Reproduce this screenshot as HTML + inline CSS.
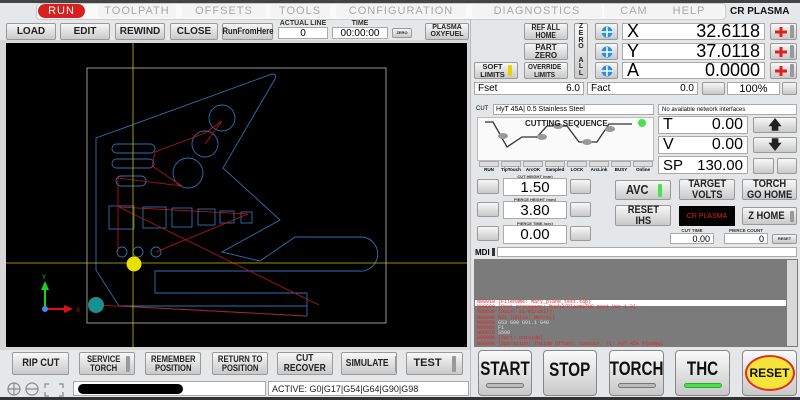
<!DOCTYPE html>
<html><head><meta charset="utf-8">
<style>
*{margin:0;padding:0;box-sizing:border-box}
body{width:800px;height:400px;overflow:hidden;background:#e6e7e8;font-family:"Liberation Sans",sans-serif;position:relative}
.a{position:absolute}
.btn{position:absolute;background:linear-gradient(#f7f7f7,#c9c9c9);border:1px solid #9a9a9a;border-radius:2px;color:#222;font-weight:bold;display:flex;align-items:center;justify-content:center;text-align:center;line-height:0.95;font-family:"Liberation Sans Narrow","Liberation Sans",sans-serif;white-space:nowrap}
.box{position:absolute;background:#fff;border:1px solid #aaa;display:flex;align-items:center}
.tab{position:absolute;top:4px;height:14px;background:#f4f4f4;color:#a9a9a9;font-size:11px;display:flex;align-items:center;justify-content:center;letter-spacing:1px;border-radius:3px}
.lbl{position:absolute;font-size:5px;color:#333;text-align:center;font-weight:bold}
.ind{display:inline-block;width:4px;background:#999;border-radius:1px;margin-left:3px}
.bb{position:absolute;top:350px;height:46px;background:linear-gradient(#fafafa,#c8c8c8);border:1px solid #888;border-radius:4px;font-weight:bold;font-size:19px;color:#111;display:flex;flex-direction:column;align-items:center;justify-content:center}
.bb span{display:inline-block;transform:scaleX(0.8)}
.bar{width:38px;height:5px;border:1px solid #777;border-radius:3px;background:#bbb;margin-top:2px}
.n{display:inline-block;transform:scaleX(0.85)}
</style></head><body>
<div class="a" style="left:0;top:0;width:800px;height:3px;background:#444"></div>
<div class="a" style="left:36px;top:3px;width:690px;height:17px;background:#fafafa;border-radius:4px;border:1px solid #ccc"></div>
<div class="tab" style="left:38px;width:47px;background:#d8211e;color:#fff;border-radius:7px">RUN</div>
<div class="tab" style="left:98px;width:78px">TOOLPATH</div>
<div class="tab" style="left:182px;width:84px">OFFSETS</div>
<div class="tab" style="left:270px;width:60px">TOOLS</div>
<div class="tab" style="left:336px;width:130px">CONFIGURATION</div>
<div class="tab" style="left:472px;width:130px">DIAGNOSTICS</div>
<div class="tab" style="left:604px;width:60px">CAM</div>
<div class="tab" style="left:654px;width:70px">HELP</div>
<div class="a" style="left:730px;top:6px;font-size:10px;font-weight:bold;color:#111">CR PLASMA</div>
<div class="btn" style="left:6px;top:23px;width:50px;height:17px;font-size:10px">LOAD</div>
<div class="btn" style="left:60px;top:23px;width:50px;height:17px;font-size:10px">EDIT</div>
<div class="btn" style="left:115px;top:23px;width:50px;height:17px;font-size:10px">REWIND</div>
<div class="btn" style="left:170px;top:23px;width:48px;height:17px;font-size:10px">CLOSE</div>
<div class="btn" style="left:222px;top:23px;width:51px;height:17px;font-size:9px"><span class="n">RunFromHere</span></div>
<div class="lbl" style="left:278px;top:20px;width:50px;font-size:7px">ACTUAL LINE</div>
<div class="box" style="left:278px;top:27px;width:50px;height:12px;justify-content:center;font-size:10px">0</div>
<div class="lbl" style="left:332px;top:20px;width:56px;font-size:7px">TIME</div>
<div class="box" style="left:332px;top:27px;width:56px;height:12px;justify-content:center;font-size:10px">00:00:00</div>
<div class="btn" style="left:392px;top:28px;width:20px;height:10px;font-size:4px">ZERO</div>
<div class="btn" style="left:425px;top:23px;width:44px;height:17px;font-size:7px">PLASMA<br>OXYFUEL</div>
<svg class="a" style="left:0;top:40px" width="470" height="310" viewBox="0 40 470 310">
<rect x="0" y="40" width="470" height="310" fill="#d8d8d8"/>
<rect x="6" y="43" width="461" height="304" fill="#000"/>
<rect x="87" y="68" width="299" height="255" fill="none" stroke="#bbb" stroke-width="0.8"/>
<g fill="none" stroke="#2f6fb0" stroke-width="0.9">
<path d="M96 138 L272 74 Q277 74 275 79 L223 168 L280 220 L222 252 L260 261 L295 237 L363 237 A17 17 0 0 1 358 271 L155 271 L155 293 L307 293 L307 316 L119 306 L96 270 Z"/>
<path d="M119 306 L307 306"/>
<circle cx="222" cy="118" r="13"/><circle cx="205" cy="144" r="13"/><circle cx="188" cy="173" r="15"/>
<rect x="112" y="144" width="43" height="9" rx="4.5"/><rect x="112" y="159" width="42" height="9" rx="4.5"/><rect x="116" y="176" width="30" height="10" rx="5"/>
<rect x="109" y="206" width="25" height="23"/><rect x="143" y="207" width="23" height="21"/><rect x="172" y="208" width="20" height="19"/><rect x="198" y="209" width="17" height="16"/><rect x="220" y="211" width="14" height="12"/><rect x="241" y="212" width="11" height="11"/>
<circle cx="122" cy="252" r="5"/><circle cx="138" cy="252" r="5"/><circle cx="156" cy="252" r="5"/>
</g>
<g fill="none" stroke="#c0141a" stroke-width="0.8">
<path d="M96 305 L307 316"/><path d="M119 207 L319 305"/><path d="M119 207 L248 214 L156 252"/><path d="M118 178 L118 252"/><path d="M118 178 L182 186 L152 166 L155 152 L205 133 L222 121 L205 144"/>
</g>
<line x1="133" y1="43" x2="133" y2="347" stroke="#c8c000" stroke-width="0.8"/>
<line x1="6" y1="263" x2="467" y2="263" stroke="#c8c000" stroke-width="0.8"/>
<circle cx="134" cy="264" r="7.5" fill="#e8e000"/>
<circle cx="96" cy="305" r="8" fill="#1a8f8f"/>
<path d="M45 309 V289" stroke="#1fd01f" stroke-width="2"/><path d="M41 290 L45 281 L49 290Z" fill="#1fd01f"/>
<path d="M45 309 H65" stroke="#e01010" stroke-width="2"/><path d="M64 305 L73 309 L64 313Z" fill="#e01010"/>
<circle cx="45" cy="309" r="3" fill="#3a8ee8"/>
<text x="76" y="312" font-size="6" fill="#e01010">X</text><text x="42" y="279" font-size="6" fill="#1fd01f">Y</text>
</svg>
<div class="btn" style="left:12px;top:352px;width:57px;height:23px;font-size:11px"><span class="n">RIP CUT</span></div>
<div class="btn" style="left:79px;top:352px;width:56px;height:23px;font-size:9px"><span class="n">SERVICE<br>TORCH</span><span class="ind" style="height:16px"></span></div>
<div class="btn" style="left:145px;top:352px;width:56px;height:23px;font-size:9px"><span class="n">REMEMBER<br>POSITION</span></div>
<div class="btn" style="left:212px;top:352px;width:56px;height:23px;font-size:9px"><span class="n">RETURN TO<br>POSITION</span></div>
<div class="btn" style="left:277px;top:352px;width:56px;height:23px;font-size:10px"><span class="n">CUT<br>RECOVER</span></div>
<div class="btn" style="left:341px;top:352px;width:56px;height:23px;font-size:10px"><span class="n">SIMULATE</span><span class="ind" style="height:16px"></span></div>
<div class="btn" style="left:406px;top:352px;width:57px;height:23px;font-size:11px">TEST<span class="ind" style="height:16px;margin-left:10px"></span></div>
<svg class="a" style="left:4px;top:380px" width="66" height="18"><g fill="none" stroke="#888" stroke-width="1.2"><circle cx="10" cy="9" r="6"/><path d="M4 9h12M10 3v12"/><circle cx="28" cy="9" r="6"/><path d="M22 9h12"/><path d="M45 4h-4v4M55 4h4v4M45 16h-4v-4M55 16h4v-4"/></g></svg>
<div class="box" style="left:73px;top:381px;width:193px;height:15px;padding-left:4px"><div style="width:105px;height:10px;background:#000;border-radius:5px"></div></div>
<div class="box" style="left:268px;top:381px;width:201px;height:15px;font-size:9px;padding-left:3px;color:#222">ACTIVE: G0|G17|G54|G64|G90|G98</div>
<div class="a" style="left:470px;top:20px;width:330px;height:380px;background:#e4e6e8;border-left:1px solid #bbb"></div>
<div class="btn" style="left:524px;top:23px;width:44px;height:17px;font-size:8px"><span class="n">REF ALL<br>HOME</span></div>
<div class="btn" style="left:524px;top:43px;width:44px;height:17px;font-size:8px">PART<br>ZERO</div>
<div class="btn" style="left:474px;top:62px;width:44px;height:17px;font-size:7.5px">SOFT<br>LIMITS<span class="ind" style="height:11px;background:#f0d000"></span></div>
<div class="btn" style="left:524px;top:62px;width:44px;height:17px;font-size:7.5px"><span class="n">OVERRIDE<br>LIMITS</span><span class="ind" style="height:11px"></span></div>
<div class="btn" style="left:574px;top:23px;width:14px;height:56px;font-size:7px;flex-direction:column">Z<br>E<br>R<br>O<br><br>A<br>L<br>L</div>
<div class="btn" style="left:595px;top:23px;width:23px;height:17px"><svg width="14" height="12"><circle cx="7" cy="6" r="5.5" fill="#2a8fe0"/><path d="M1 6h12M7 1v10" stroke="#fff" stroke-width="1.5"/></svg></div>
<div class="btn" style="left:595px;top:43px;width:23px;height:17px"><svg width="14" height="12"><circle cx="7" cy="6" r="5.5" fill="#2a8fe0"/><path d="M1 6h12M7 1v10" stroke="#fff" stroke-width="1.5"/></svg></div>
<div class="btn" style="left:595px;top:62px;width:23px;height:17px"><svg width="14" height="12"><circle cx="7" cy="6" r="5.5" fill="#2a8fe0"/><path d="M1 6h12M7 1v10" stroke="#fff" stroke-width="1.5"/></svg></div>
<div class="box" style="left:622px;top:23px;width:143px;height:17px;font-size:18px;justify-content:space-between;padding:0 4px"><span>X</span><span>32.6118</span></div>
<div class="box" style="left:622px;top:43px;width:143px;height:17px;font-size:18px;justify-content:space-between;padding:0 4px"><span>Y</span><span>37.0118</span></div>
<div class="box" style="left:622px;top:62px;width:143px;height:17px;font-size:18px;justify-content:space-between;padding:0 4px"><span>A</span><span>0.0000</span></div>
<div class="btn" style="left:770px;top:23px;width:27px;height:17px;justify-content:flex-start;padding-left:3px"><svg width="14" height="12"><path d="M1 6h12M7 1v10" stroke="#e02020" stroke-width="3"/></svg><span class="ind" style="height:13px;margin-left:2px"></span></div>
<div class="btn" style="left:770px;top:43px;width:27px;height:17px;justify-content:flex-start;padding-left:3px"><svg width="14" height="12"><path d="M1 6h12M7 1v10" stroke="#e02020" stroke-width="3"/></svg><span class="ind" style="height:13px;margin-left:2px"></span></div>
<div class="btn" style="left:770px;top:62px;width:27px;height:17px;justify-content:flex-start;padding-left:3px"><svg width="14" height="12"><path d="M1 6h12M7 1v10" stroke="#e02020" stroke-width="3"/></svg><span class="ind" style="height:13px;margin-left:2px"></span></div>
<div class="box" style="left:474px;top:82px;width:110px;height:13px;font-size:10px;justify-content:space-between;padding:0 3px"><span>Fset</span><span>6.0</span></div>
<div class="box" style="left:587px;top:82px;width:111px;height:13px;font-size:10px;justify-content:space-between;padding:0 3px"><span>Fact</span><span>0.0</span></div>
<div class="btn" style="left:702px;top:82px;width:23px;height:13px"></div>
<div class="box" style="left:727px;top:82px;width:53px;height:13px;font-size:11px;justify-content:center">100%</div>
<div class="btn" style="left:782px;top:82px;width:15px;height:13px"></div>
<div class="a" style="left:476px;top:106px;font-size:6px">CUT</div>
<div class="box" style="left:493px;top:104px;width:161px;height:11px;font-size:7px;padding-left:2px">HyT 45A| 0.5 Stainless Steel</div>
<div class="box" style="left:658px;top:104px;width:139px;height:11px;font-size:6px;padding-left:3px">No  available network interfaces</div>
<div class="a" style="left:477px;top:117px;width:177px;height:44px;background:#fafafa;border:1px solid #bbb"></div>
<svg class="a" style="left:477px;top:117px" width="177" height="44"><path d="M8 5 L16 5 L30 30 L45 20 L60 20 L70 9 L90 9 L102 25 L120 25 L132 7 L155 7" fill="none" stroke="#333" stroke-width="1.3"/><g fill="#999"><ellipse cx="26" cy="19" rx="5" ry="3"/><ellipse cx="65" cy="20" rx="5" ry="3"/><ellipse cx="81" cy="9" rx="5" ry="3"/><ellipse cx="110" cy="25" rx="5" ry="3"/><ellipse cx="133" cy="12" rx="5" ry="3"/></g><circle cx="165" cy="6" r="4" fill="#4ce04c"/><text x="48" y="9" font-size="8" font-weight="bold" fill="#222">CUTTING SEQUENCE</text></svg>
<div class="a" style="left:479px;top:161px;width:174px;height:12px;display:flex;gap:2px">
<div style="flex:1;font-size:4.5px;text-align:center;font-weight:bold"><div style="height:6px;background:#ddd;border:1px solid #aaa"></div>RUN</div>
<div style="flex:1;font-size:4.5px;text-align:center;font-weight:bold"><div style="height:6px;background:#ddd;border:1px solid #aaa"></div>TipTouch</div>
<div style="flex:1;font-size:4.5px;text-align:center;font-weight:bold"><div style="height:6px;background:#ddd;border:1px solid #aaa"></div>ArcOK</div>
<div style="flex:1;font-size:4.5px;text-align:center;font-weight:bold"><div style="height:6px;background:#ddd;border:1px solid #aaa"></div>Sampled</div>
<div style="flex:1;font-size:4.5px;text-align:center;font-weight:bold"><div style="height:6px;background:#ddd;border:1px solid #aaa"></div>LOCK</div>
<div style="flex:1;font-size:4.5px;text-align:center;font-weight:bold"><div style="height:6px;background:#ddd;border:1px solid #aaa"></div>ArcLink</div>
<div style="flex:1;font-size:4.5px;text-align:center;font-weight:bold"><div style="height:6px;background:#ddd;border:1px solid #aaa"></div>BUSY</div>
<div style="flex:1;font-size:4.5px;text-align:center;font-weight:bold"><div style="height:6px;background:#ddd;border:1px solid #aaa"></div>Online</div></div>
<div class="box" style="left:658px;top:116px;width:90px;height:18px;font-size:16px;justify-content:space-between;padding:0 4px"><span>T</span><span>0.00</span></div>
<div class="box" style="left:658px;top:136px;width:90px;height:18px;font-size:16px;justify-content:space-between;padding:0 4px"><span>V</span><span>0.00</span></div>
<div class="box" style="left:658px;top:156px;width:90px;height:18px;font-size:15px;justify-content:space-between;padding:0 4px"><span>SP</span><span>130.00</span></div>
<div class="btn" style="left:753px;top:117px;width:44px;height:16px;font-size:13px">&#129093;</div>
<div class="btn" style="left:753px;top:137px;width:44px;height:16px;font-size:13px">&#129095;</div>
<div class="btn" style="left:753px;top:158px;width:21px;height:16px"></div>
<div class="btn" style="left:777px;top:158px;width:20px;height:16px"></div>
<div class="lbl" style="left:503px;top:174px;width:64px;font-size:4px">CUT HEIGHT (mm)</div>
<div class="btn" style="left:477px;top:179px;width:22px;height:15px"></div>
<div class="box" style="left:503px;top:178px;width:64px;height:18px;font-size:15px;justify-content:center">1.50</div>
<div class="btn" style="left:570px;top:179px;width:21px;height:15px"></div>
<div class="lbl" style="left:503px;top:197px;width:64px;font-size:4px">PIERCE HEIGHT (mm)</div>
<div class="btn" style="left:477px;top:202px;width:22px;height:15px"></div>
<div class="box" style="left:503px;top:201px;width:64px;height:18px;font-size:15px;justify-content:center">3.80</div>
<div class="btn" style="left:570px;top:202px;width:21px;height:15px"></div>
<div class="lbl" style="left:503px;top:221px;width:64px;font-size:4px">PIERCE TIME (sec)</div>
<div class="btn" style="left:477px;top:226px;width:22px;height:15px"></div>
<div class="box" style="left:503px;top:225px;width:64px;height:19px;font-size:15px;justify-content:center">0.00</div>
<div class="btn" style="left:570px;top:226px;width:21px;height:15px"></div>
<div class="btn" style="left:615px;top:180px;width:56px;height:20px;font-size:13px"><span class="n">AVC</span><span class="ind" style="height:13px;background:#4ce04c;margin-left:8px"></span></div>
<div class="btn" style="left:679px;top:179px;width:56px;height:21px;font-size:11px"><span class="n">TARGET<br>VOLTS</span></div>
<div class="btn" style="left:742px;top:179px;width:55px;height:21px;font-size:11px"><span class="n">TORCH<br>GO HOME</span></div>
<div class="btn" style="left:615px;top:205px;width:56px;height:21px;font-size:11px"><span class="n">RESET<br>IHS</span></div>
<div class="a" style="left:679px;top:206px;width:56px;height:20px;background:#000;color:#e02020;font-size:7px;display:flex;align-items:center;justify-content:center">CR PLASMA</div>
<div class="btn" style="left:742px;top:207px;width:55px;height:18px;font-size:11px"><span class="n">Z HOME</span><span class="ind" style="height:11px"></span></div>
<div class="lbl" style="left:670px;top:228px;width:44px;font-size:4.5px">CUT TIME</div>
<div class="box" style="left:670px;top:233px;width:44px;height:11px;font-size:9px;justify-content:flex-end;padding-right:3px">0.00</div>
<div class="lbl" style="left:724px;top:228px;width:44px;font-size:4.5px">PIERCE COUNT</div>
<div class="box" style="left:724px;top:233px;width:44px;height:11px;font-size:9px;justify-content:flex-end;padding-right:3px">0</div>
<div class="btn" style="left:772px;top:234px;width:25px;height:10px;font-size:4px">RESET</div>
<div class="a" style="left:475px;top:248px;font-size:8px;font-weight:bold">MDI</div>
<div class="a" style="left:492px;top:248px;width:3px;height:8px;background:#333"></div>
<div class="box" style="left:497px;top:247px;width:300px;height:10px"></div>
<div class="a" style="left:474px;top:259px;width:324px;height:88px;background:#7a7b7a"></div>
<div class="a" style="left:787px;top:260px;width:10px;height:86px;background:#d8d8d8"></div>
<div class="a" style="left:475px;top:300px;width:311px;height:6px;background:#fff"></div>
<div class="a" style="left:477px;top:300px;font-size:5px;line-height:5.2px;color:#e22;font-family:'Liberation Mono',monospace">
N00010 (Filename: Mary_plane_test.tap)<br>N00020 (Post processor: Mach3/PlasmaTHC.post Ver 1.0)<br>N00030 (Date: 31/05/2017)<br>N00040 G21 (Units: Metric)<br>N00050 <span style="color:#ddd">G53 G90 G91.1 G40</span><br>N00060 <span style="color:#ddd">F1</span><br>N00070 <span style="color:#ddd">S500</span><br>N00080 (Part: outside)<br>N00090 (Operation: Inside Offset, contour, T1: HyT 45A Plasma)</div>
<div class="bb" style="left:478px;width:54px"><span>START</span><div class="bar"></div></div>
<div class="bb" style="left:543px;width:54px;padding-bottom:4px"><span>STOP</span></div>
<div class="bb" style="left:609px;width:55px"><span>TORCH</span><div class="bar"></div></div>
<div class="bb" style="left:675px;width:55px"><span>THC</span><div class="bar" style="background:#4ce04c;border-color:#3a3"></div></div>
<div class="bb" style="left:742px;width:55px"><div style="width:50px;height:36px;border-radius:50%;background:#f5e43a;border:2px solid #e03020;display:flex;align-items:center;justify-content:center;font-size:12px">RESET</div></div>
<div class="a" style="left:0;top:397px;width:800px;height:3px;background:#333"></div>
</body></html>
